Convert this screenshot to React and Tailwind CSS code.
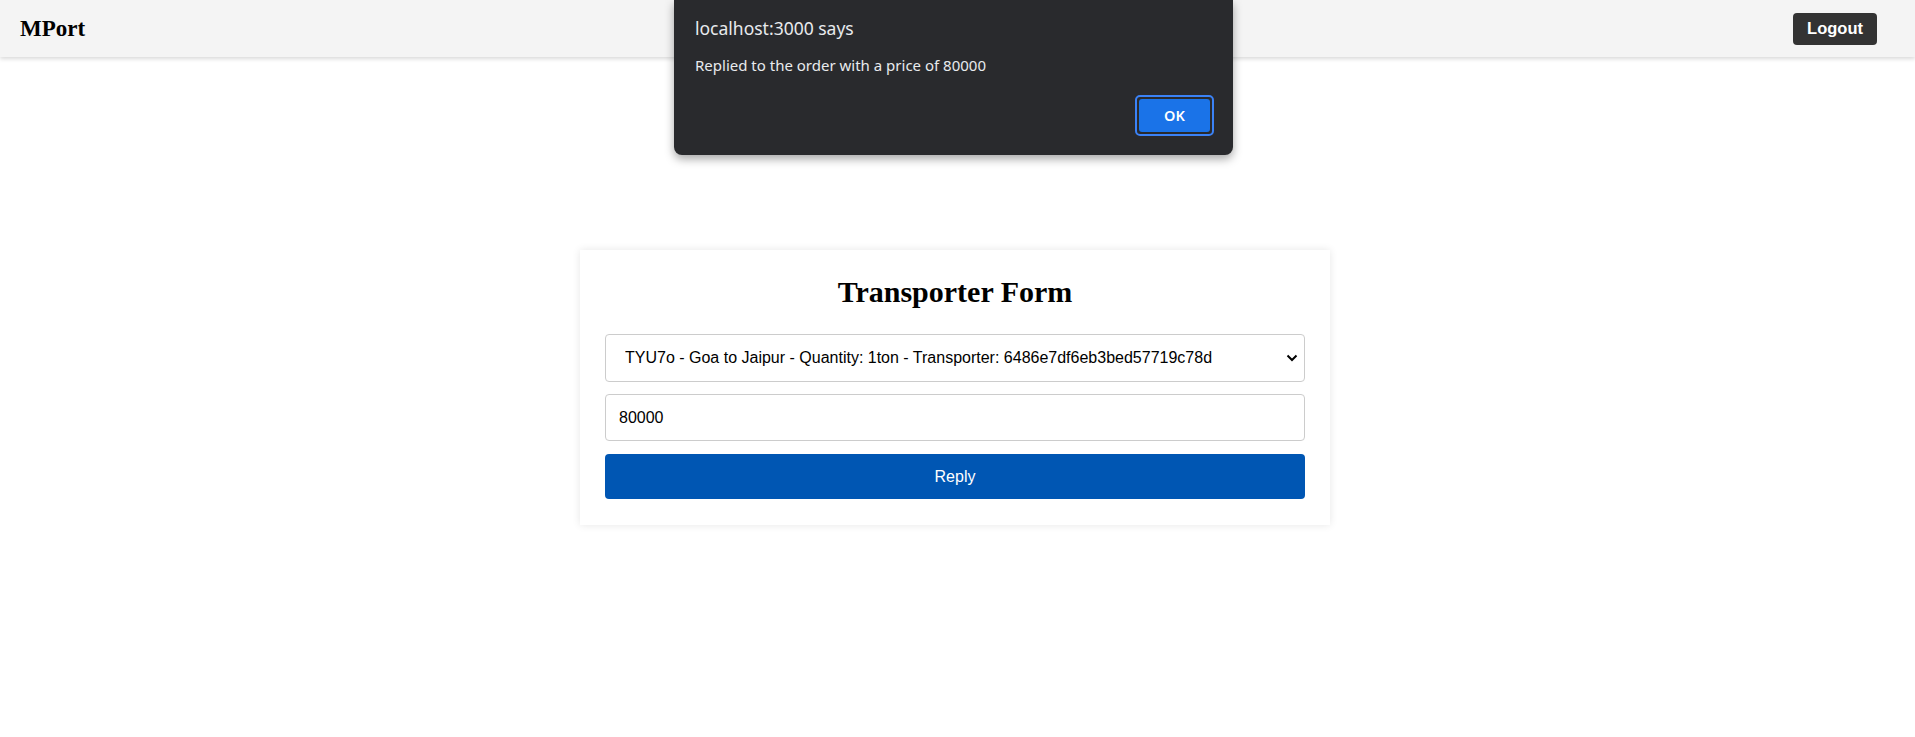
import React, { useState } from 'react';

const order = {
  id: "TYU7o",
  from: "Goa",
  to: "Jaipur",
  quantity: "1ton",
  transporter: "6486e7df6eb3bed57719c78d",
};

export default function App() {
  const [price, setPrice] = useState("80000");

  return (
    <div className="relative min-h-[737px] w-full bg-white">
      {/* Navbar */}
      <header className="flex h-[57px] items-center justify-between bg-[#f4f4f4] pl-[20px] pr-[38px] shadow-[0_2px_4px_rgba(0,0,0,0.15)]">
        <h1 className="m-0 font-['Liberation_Serif',serif] text-[23px] font-bold leading-none text-black">
          MPort
        </h1>
        <button className="h-[32px] rounded-[4px] bg-[#333] px-[14px] font-['Liberation_Sans',Arial,sans-serif] text-[16.5px] font-bold text-white">
          Logout
        </button>
      </header>

      {/* Form card */}
      <div className="flex justify-center pt-[193px] pr-[5px]">
        <div className="w-[750px] bg-white px-[25px] pt-[25px] pb-[26px] shadow-[0_0_8px_rgba(0,0,0,0.1)]">
          <h2 className="mb-[25px] text-center font-['Liberation_Serif',serif] text-[30px] font-bold leading-[34px] text-black">
            Transporter Form
          </h2>

          <div className="relative">
            <select className="h-[48px] w-full appearance-none rounded-[4px] border border-[#ccc] bg-white pl-[19px] pr-[40px] font-['Liberation_Sans',Arial,sans-serif] text-[16px] text-black outline-none">
              <option>
                {`${order.id} - ${order.from} to ${order.to} - Quantity: ${order.quantity} - Transporter: ${order.transporter}`}
              </option>
            </select>
            <svg
              className="pointer-events-none absolute right-[7px] top-[19px]"
              width="12"
              height="10"
              viewBox="0 0 12 10"
              fill="none"
            >
              <path d="M1.5 2.5 L6 7 L10.5 2.5" stroke="#000" strokeWidth="2" />
            </svg>
          </div>

          <input
            className="mt-[12px] h-[47px] w-full rounded-[4px] border border-[#ccc] bg-white px-[13px] font-['Liberation_Sans',Arial,sans-serif] text-[16px] text-black outline-none"
            value={price}
            onChange={(e) => setPrice(e.target.value)}
          />

          <button className="mt-[13px] h-[45px] w-full rounded-[4px] bg-[#0056b3] font-['Liberation_Sans',Arial,sans-serif] text-[16px] text-white">
            Reply
          </button>
        </div>
      </div>

      {/* Browser alert */}
      <div className="absolute left-[674px] top-0 h-[155px] w-[559px] rounded-b-[8px] bg-[#292a2d] shadow-[0_4px_10px_rgba(0,0,0,0.35)] font-['Noto_Sans','Open_Sans',sans-serif]">
        <div className="px-[21px] pt-[16px]">
          <p className="text-[17.5px] leading-[24px] text-[#e8eaed]">localhost:3000 says</p>
          <p className="mt-[14px] text-[15px] leading-[22px] text-[#e8eaed]">
            Replied to the order with a price of 80000
          </p>
        </div>
        <div className="absolute right-[19px] top-[95px] rounded-[5px] border-2 border-[#3b82f6] p-[2px]">
          <button className="flex h-[33px] w-[71px] items-center justify-center rounded-[3px] bg-[#1a73e8] text-[14.5px] font-semibold text-white">
            OK
          </button>
        </div>
      </div>
    </div>
  );
}
